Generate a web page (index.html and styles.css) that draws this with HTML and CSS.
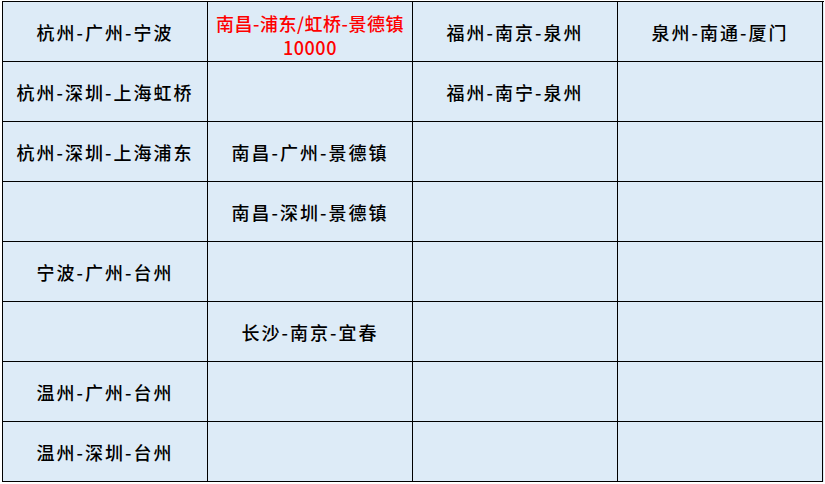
FILE: index.html
```html
<!DOCTYPE html>
<html lang="zh">
<head>
<meta charset="utf-8">
<link rel="stylesheet" href="styles.css">
</head>
<body>
<div class="sheet">
  <div class="cell">杭州-广州-宁波</div>
  <div class="cell red">南昌-浦东/虹桥-景德镇<br>10000</div>
  <div class="cell">福州-南京-泉州</div>
  <div class="cell">泉州-南通-厦门</div>

  <div class="cell">杭州-深圳-上海虹桥</div>
  <div class="cell"></div>
  <div class="cell">福州-南宁-泉州</div>
  <div class="cell"></div>

  <div class="cell">杭州-深圳-上海浦东</div>
  <div class="cell">南昌-广州-景德镇</div>
  <div class="cell"></div>
  <div class="cell"></div>

  <div class="cell"></div>
  <div class="cell">南昌-深圳-景德镇</div>
  <div class="cell"></div>
  <div class="cell"></div>

  <div class="cell">宁波-广州-台州</div>
  <div class="cell"></div>
  <div class="cell"></div>
  <div class="cell"></div>

  <div class="cell"></div>
  <div class="cell">长沙-南京-宜春</div>
  <div class="cell"></div>
  <div class="cell"></div>

  <div class="cell">温州-广州-台州</div>
  <div class="cell"></div>
  <div class="cell"></div>
  <div class="cell"></div>

  <div class="cell">温州-深圳-台州</div>
  <div class="cell"></div>
  <div class="cell"></div>
  <div class="cell"></div>
</div>
</body>
</html>
```
FILE: styles.css
```css
html, body {
  margin: 0;
  padding: 0;
  background: #ffffff;
}
body {
  padding: 1px 0 0 2px;
}
.sheet {
  display: grid;
  grid-template-columns: repeat(4, 205px);
  grid-template-rows: repeat(8, 60px);
  width: 821px;
  border-top: 1px solid #000;
  border-left: 1px solid #000;
  background: #ddebf7;
  font-family: "Noto Sans CJK SC", "Noto Sans", sans-serif;
  font-size: 18px;
  font-weight: 500;
  letter-spacing: 2px;
  color: #000;
}
.cell {
  border-right: 1px solid #000;
  border-bottom: 1px solid #000;
  display: flex;
  align-items: center;
  justify-content: center;
  text-align: center;
  line-height: 22px;
}
.red {
  color: #ff0000;
  align-items: flex-start;
  padding-top: 9px;
  line-height: 24px;
  letter-spacing: 0.5px;
}
```
